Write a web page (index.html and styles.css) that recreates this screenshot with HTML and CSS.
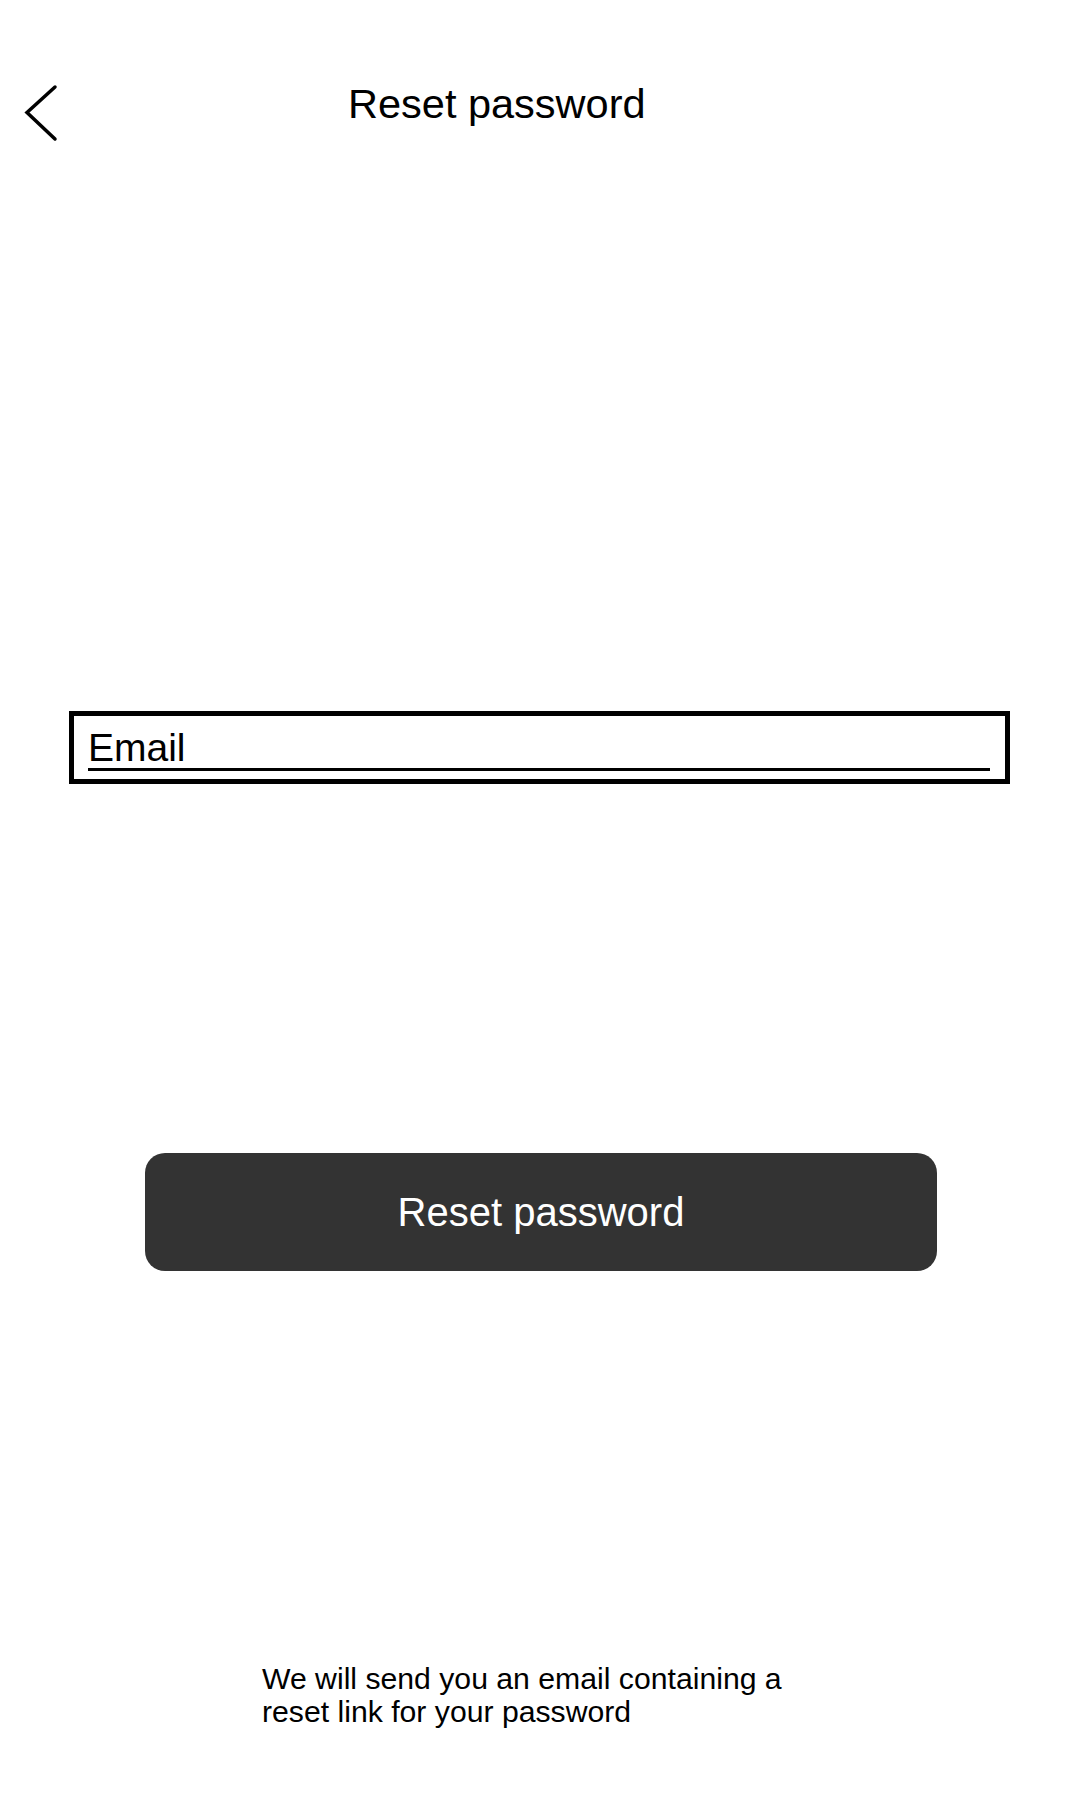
FILE: index.html
```html
<!DOCTYPE html>
<html lang="en">
<head>
<meta charset="utf-8">
<title>Reset password</title>
<link rel="stylesheet" href="styles.css">
</head>
<body>
<div class="page">
  <header class="header">
    <button class="back" aria-label="Back">
      <svg width="38" height="58" viewBox="0 0 38 58" aria-hidden="true">
        <polyline points="33,3 5,28.5 33,55" fill="none" stroke="#000" stroke-width="3.5" stroke-linecap="round" stroke-linejoin="miter"/>
      </svg>
    </button>
    <h1 class="title">Reset password</h1>
  </header>

  <div class="field">
    <div class="field-label">Email</div>
  </div>

  <button class="primary">Reset password</button>

  <p class="note">We will send you an email containing a reset link for your password</p>
</div>
</body>
</html>
```

FILE: styles.css
```css
html, body {
  margin: 0;
  padding: 0;
  background: #fff;
}

body {
  font-family: "Liberation Sans", Arial, sans-serif;
  color: #000;
}

.page {
  width: 1080px;
  height: 1800px;
  display: flex;
  flex-direction: column;
  align-items: flex-start;
}

.header {
  display: flex;
  align-items: flex-start;
  padding-top: 80px;
  width: 100%;
}

.back {
  margin: 4px 0 0 22px;
  padding: 0;
  border: 0;
  background: none;
  width: 38px;
  height: 58px;
  display: block;
}

.back svg {
  display: block;
}

.title {
  margin: 0 0 0 288px;
  font-size: 41.5px;
  line-height: 48px;
  font-weight: 400;
}

.field {
  margin: 569px 0 0 69px;
  width: 941px;
  box-sizing: border-box;
  border: 5px solid #000;
  padding: 12px 15px 8px 14px;
}

.field-label {
  font-size: 39px;
  line-height: 40px;
  border-bottom: 3px solid #000;
}

.primary {
  margin: 369px 0 0 145px;
  width: 792px;
  height: 118px;
  border: 0;
  border-radius: 20px;
  background: #333333;
  color: #fff;
  font-family: "Liberation Sans", Arial, sans-serif;
  font-size: 40px;
  padding: 0;
}

.note {
  margin: 391px 0 0 262px;
  width: 560px;
  font-size: 30.2px;
  line-height: 33px;
}
```
